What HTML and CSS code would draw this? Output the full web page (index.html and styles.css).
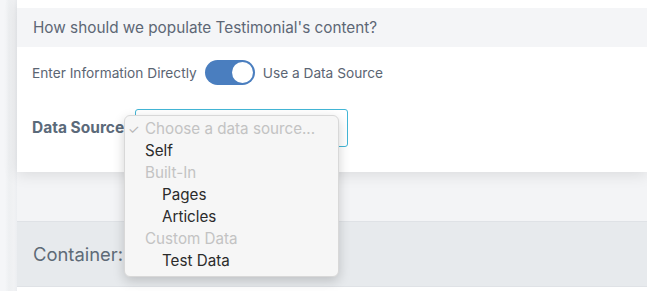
FILE: index.html
```html
<!DOCTYPE html>
<html>
<head>
<meta charset="utf-8">
<link rel="stylesheet" href="styles.css">
</head>
<body>
<div class="gutter"></div>
<div class="main">
  <section class="card">
    <div class="card-head">How should we populate Testimonial's content?</div>
    <div class="card-body">
      <div class="toggle-row">
        <span>Enter Information Directly</span>
        <span class="toggle"><span class="knob"></span></span>
        <span>Use a Data Source</span>
      </div>
      <div class="field-row">
        <label class="field-label">Data Source</label>
        <div class="select-wrap">
          <div class="select"></div>
          <ul class="menu">
            <li class="opt placeholder"><span class="check">✓</span>Choose a data source...</li>
            <li class="opt">Self</li>
            <li class="opt group">Built-In</li>
            <li class="opt sub">Pages</li>
            <li class="opt sub">Articles</li>
            <li class="opt group">Custom Data</li>
            <li class="opt sub">Test Data</li>
          </ul>
        </div>
      </div>
    </div>
  </section>
  <div class="spacer"></div>
  <section class="container-section">
    <div class="container-title">Container:</div>
  </section>
  <div class="after"></div>
</div>
</body>
</html>
```
FILE: styles.css
```css
html, body {
  margin: 0;
  padding: 0;
  height: 100%;
  overflow: hidden;
}
body {
  display: flex;
  background: #f3f4f6;
  font-family: Inter, "Liberation Sans", sans-serif;
}
.gutter {
  width: 17px;
  flex: none;
  background: linear-gradient(to right, #f5f6f8 0, #f5f6f8 5px, #eef0f2 9px, #f1f2f4 14px, #eceef1 17px);
}
.main {
  flex: 1;
  display: flex;
  flex-direction: column;
}
.card {
  height: 172px;
  background: #fff;
  padding-top: 8px;
  box-sizing: border-box;
  box-shadow: 0 3px 14px rgba(0, 0, 0, 0.10);
  position: relative;
  z-index: 1;
}
.card-head {
  height: 39px;
  background: #f4f5f7;
  padding-left: 16px;
  display: flex;
  align-items: center;
  font-size: 15.3px;
  color: #5d6775;
}
.card-body {
  padding: 13px 15px 0;
}
.toggle-row {
  display: flex;
  align-items: center;
  gap: 8px;
  height: 25px;
  font-size: 13.7px;
  color: #5b6573;
}
.toggle {
  width: 50px;
  height: 25px;
  border-radius: 13px;
  background: #4a7ebf;
  position: relative;
  flex: none;
}
.knob {
  position: absolute;
  right: 2px;
  top: 2px;
  width: 21px;
  height: 21px;
  border-radius: 50%;
  background: #fff;
}
.field-row {
  display: flex;
  align-items: center;
  margin-top: 24px;
  height: 37px;
}
.field-label {
  width: 103px;
  flex: none;
  font-size: 15.5px;
  font-weight: 700;
  color: #5b6a7a;
  white-space: nowrap;
}
.select-wrap {
  position: relative;
}
.select {
  width: 211px;
  height: 36px;
  border: 1px solid #43b6d6;
  border-radius: 3px;
  background: #fff;
}
.menu {
  position: absolute;
  left: -11px;
  top: 6px;
  width: 215px;
  height: 162px;
  box-sizing: border-box;
  margin: 0;
  padding: 2px 0 0;
  list-style: none;
  background: #f6f6f6;
  border: 1px solid #d8d8d8;
  border-radius: 6px;
  box-shadow: 0 4px 12px rgba(0, 0, 0, 0.18);
  z-index: 5;
  font-size: 15.2px;
}
.opt {
  height: 22px;
  line-height: 22px;
  padding-left: 20px;
  color: #2b2b2b;
  position: relative;
}
.opt.placeholder, .opt.group {
  color: #c3c3c3;
}
.opt.sub {
  padding-left: 37px;
}
.check {
  position: absolute;
  left: 3px;
  font-size: 13px;
  color: #b5b5b5;
}
.spacer {
  height: 49px;
}
.container-section {
  height: 66px;
  background: #e7eaed;
  border-top: 1px solid #dfe2e6;
  border-bottom: 1px solid #dfe2e6;
  box-sizing: border-box;
  display: flex;
  align-items: center;
  padding-left: 16px;
}
.container-title {
  font-size: 18.4px;
  color: #5e6a77;
}
.after {
  flex: 1;
  background: #fff;
}
```
